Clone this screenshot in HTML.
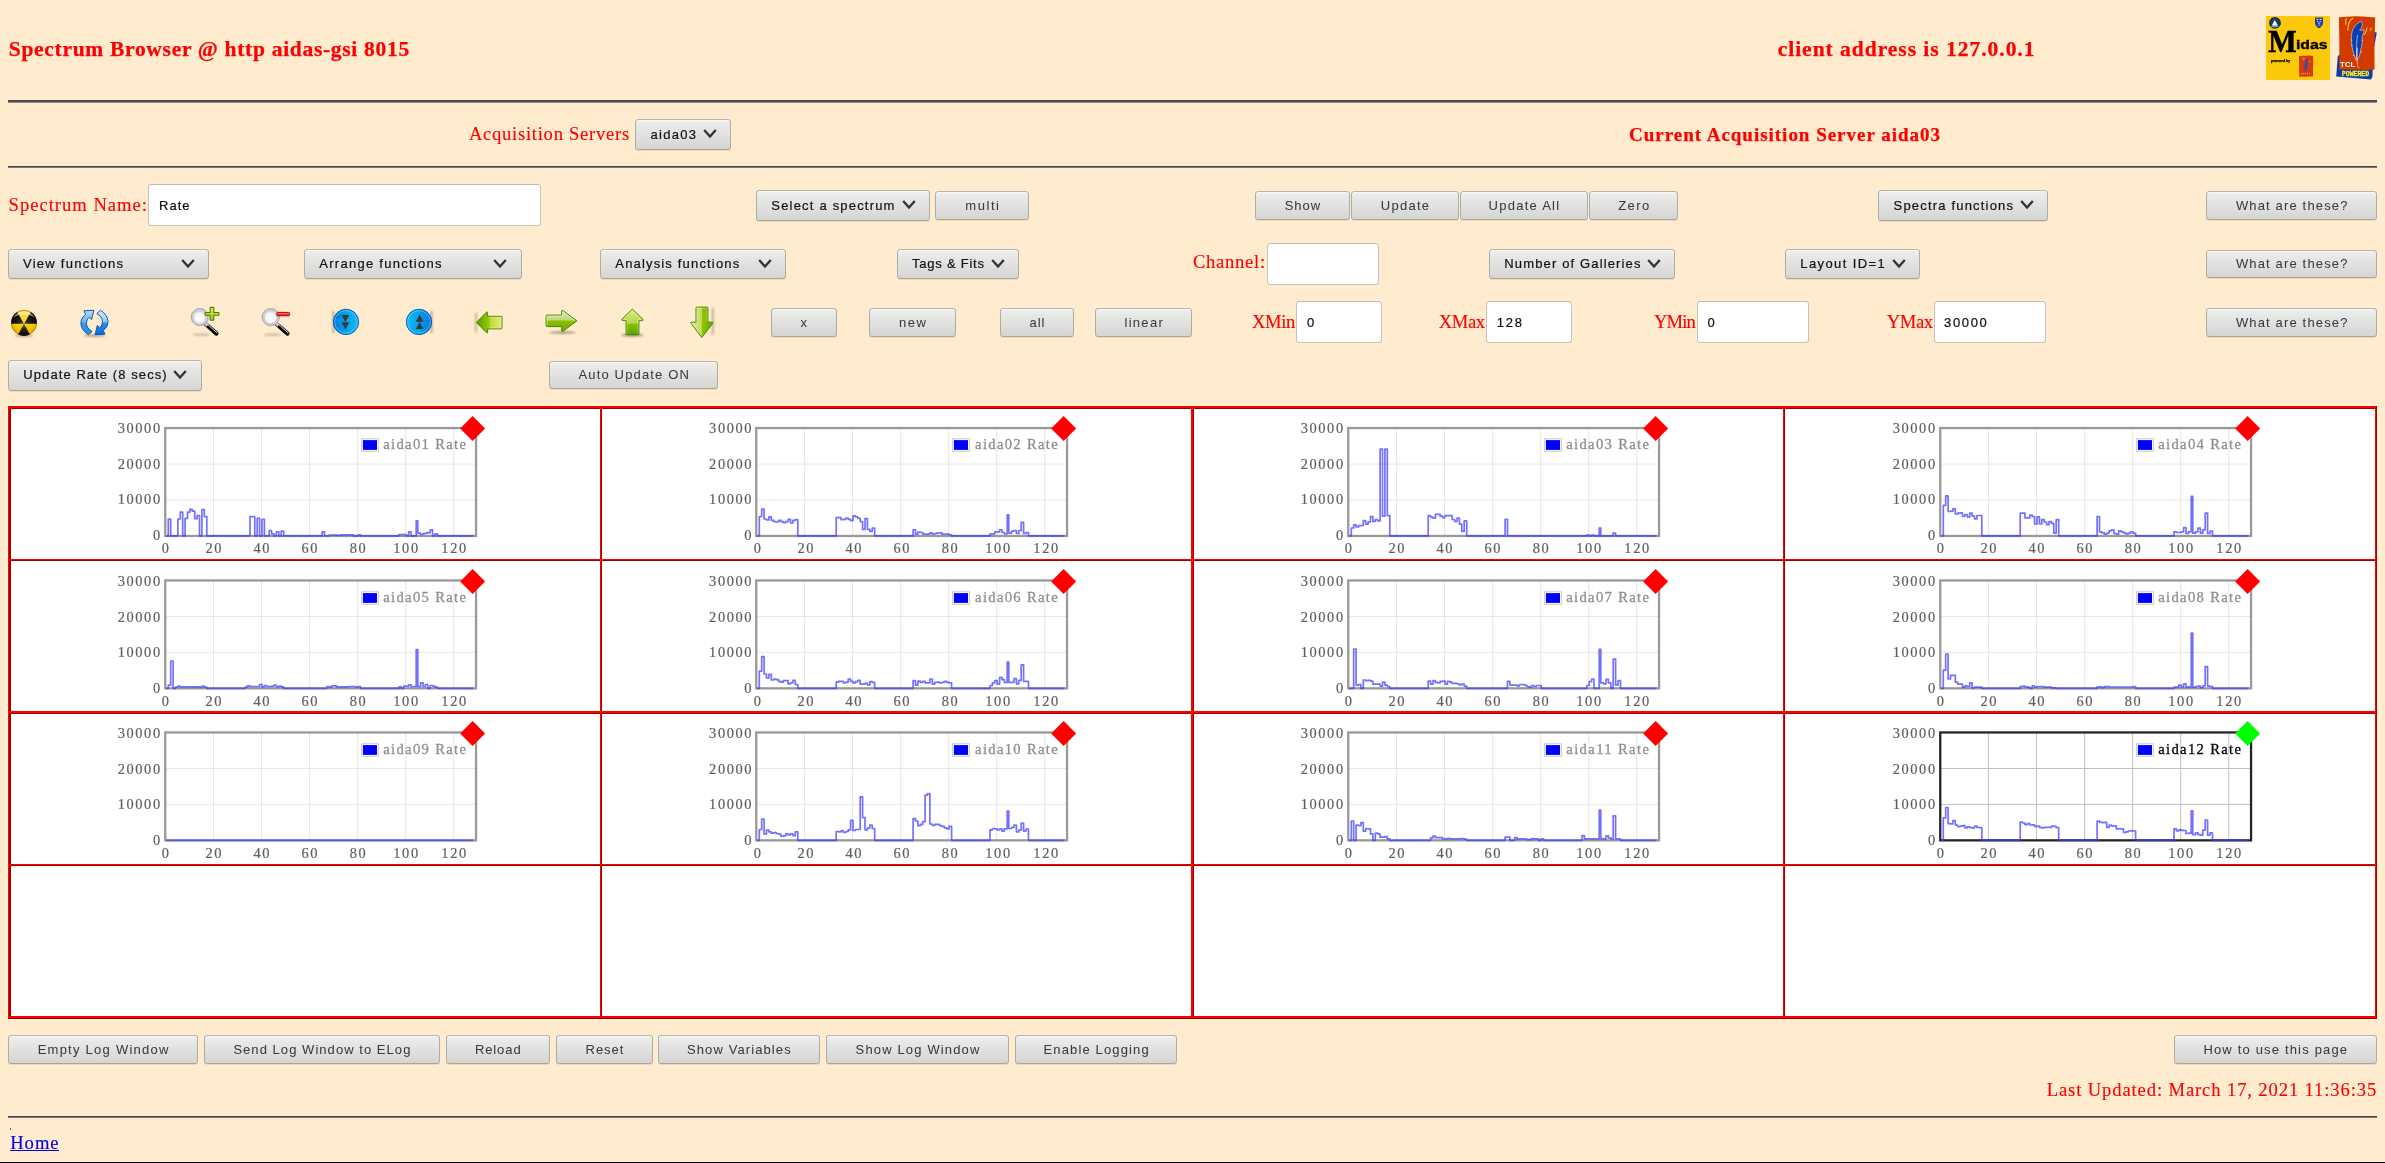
<!DOCTYPE html>
<html lang="en"><head><meta charset="utf-8"><title>Spectrum Browser</title>
<style>
html,body{margin:0;padding:0}
body{width:2385px;height:1163px;position:relative;overflow:hidden;background:#ffebcd;font:18px "Liberation Serif",serif}
.t{position:absolute;white-space:nowrap;line-height:1;margin:0;padding:0;display:block}
h2.t,h3.t{font-weight:bold}
.hr{position:absolute;left:8px;width:2369px;height:2px;background:linear-gradient(#46484c 0 50%,#76787c 50% 100%);border:0}
.btn,.sel{position:absolute;box-sizing:border-box;border:1px solid #b1b1ae;border-color:#b4b4b1 #acaca9 #aca598;border-radius:3.5px;
 background:linear-gradient(#efefee 0,#e6e6e5 30%,#d5d5d4 100%);box-shadow:inset 0 1px 0 #f7f7f6,0 1px 0 rgba(170,150,120,.22);margin:0;padding:0}
.btn{display:flex;align-items:center;justify-content:center;font:13px "Liberation Sans",sans-serif;color:#373c3f;cursor:default}
.btn span{display:block;position:relative;white-space:nowrap}
.sel{font:13px "Liberation Sans",sans-serif;color:#141414}
.sel span{position:absolute;line-height:1;white-space:nowrap}
.sel i{position:absolute;display:block;width:14px;height:10px}
.chev{display:block}
.inp{position:absolute;box-sizing:border-box;border:1px solid #c3c3c1;border-top-color:#bbbbb9;border-radius:3.5px;background:#fff;font:13px "Liberation Sans",sans-serif;color:#111;margin:0;padding:0 0 0 0;outline:0;padding-top:1px}
svg.ic{position:absolute;overflow:visible}
#page{position:absolute;left:0;top:0;width:2385px;height:1163px;will-change:transform}
.t{-webkit-text-stroke:.14px currentColor}
h2.t,h3.t{-webkit-text-stroke:.25px currentColor}
.btn span{-webkit-text-stroke:.04px currentColor}
.sel span,.inp{-webkit-text-stroke:.22px currentColor}
</style></head>
<body>
<div id="page">
<h2 class="t" style="left:8.80px;top:37.29px;font:bold 21.5px 'Liberation Serif', serif;letter-spacing:0.698px;color:#ff0000;">Spectrum Browser @ http aidas-gsi 8015</h2>
<h2 class="t" style="left:1777.70px;top:37.29px;font:bold 21.5px 'Liberation Serif', serif;letter-spacing:0.979px;color:#ff0000;">client address is 127.0.0.1</h2>
<div class="hr" style="top:100px;height:3px;background:linear-gradient(#44464a 0 33.3%,#4f5155 33.3% 66.6%,#8c8e90 66.6% 100%)"></div>
<span class="t" style="left:468.90px;top:123.42px;font:18.6px 'Liberation Serif', serif;letter-spacing:0.728px;color:#ff0000;">Acquisition Servers</span>
<div class="sel" style="left:635.3px;top:119.2px;width:95.90px;height:30.60px"><span style="left:14.10px;top:7.55px;letter-spacing:1.331px">aida03</span><i style="left:66.70px;top:8.90px"><svg class="chev" width="14" height="10" viewBox="0 0 14 10"><path d="M1.2 1.0 L7 7.6 L12.8 1.0" fill="none" stroke="#2e3436" stroke-width="2.3" stroke-linecap="butt" stroke-linejoin="miter"/></svg></i></div>
<h3 class="t" style="left:1629.00px;top:123.59px;font:bold 19px 'Liberation Serif', serif;letter-spacing:0.982px;color:#ff0000;">Current Acquisition Server aida03</h3>
<div class="hr" style="top:166px"></div>
<span class="t" style="left:8.60px;top:194.02px;font:18.6px 'Liberation Serif', serif;letter-spacing:0.994px;color:#ff0000;">Spectrum Name:</span>
<input class="inp" type="text" value="Rate" style="left:148.25px;top:184.2px;width:392.25px;height:42.00px;padding-left:9.85px;letter-spacing:0.977px;">
<div class="sel" style="left:756.25px;top:190.2px;width:173.50px;height:30.50px"><span style="left:14.05px;top:7.60px;letter-spacing:1.194px">Select a spectrum</span><i style="left:144.25px;top:8.85px"><svg class="chev" width="14" height="10" viewBox="0 0 14 10"><path d="M1.2 1.0 L7 7.6 L12.8 1.0" fill="none" stroke="#2e3436" stroke-width="2.3" stroke-linecap="butt" stroke-linejoin="miter"/></svg></i></div>
<button type="button" class="btn" style="left:935.25px;top:191.2px;width:93.75px;height:28.40px"><span style="letter-spacing:1.574px;margin-right:-1.574px;top:0.20px">multi</span></button>
<button type="button" class="btn" style="left:1255.25px;top:191.2px;width:94.25px;height:28.40px"><span style="letter-spacing:0.99px;margin-right:-0.99px;top:0.20px">Show</span></button>
<button type="button" class="btn" style="left:1351.25px;top:191.2px;width:107.25px;height:28.40px"><span style="letter-spacing:1.266px;margin-right:-1.266px;top:0.20px">Update</span></button>
<button type="button" class="btn" style="left:1459.5px;top:191.2px;width:128.75px;height:28.40px"><span style="letter-spacing:1.248px;margin-right:-1.248px;top:0.20px">Update All</span></button>
<button type="button" class="btn" style="left:1589.25px;top:191.2px;width:89.00px;height:28.40px"><span style="letter-spacing:1.422px;margin-right:-1.422px;top:0.20px">Zero</span></button>
<div class="sel" style="left:1878.4px;top:190.2px;width:169.50px;height:30.50px"><span style="left:14.20px;top:7.60px;letter-spacing:1.184px">Spectra functions</span><i style="left:140.80px;top:8.85px"><svg class="chev" width="14" height="10" viewBox="0 0 14 10"><path d="M1.2 1.0 L7 7.6 L12.8 1.0" fill="none" stroke="#2e3436" stroke-width="2.3" stroke-linecap="butt" stroke-linejoin="miter"/></svg></i></div>
<button type="button" class="btn" style="left:2206.1px;top:191.2px;width:171.15px;height:28.40px"><span style="letter-spacing:1.151px;margin-right:-1.151px;top:0.20px">What are these?</span></button>
<div class="sel" style="left:8.25px;top:248.8px;width:200.75px;height:30.50px"><span style="left:13.75px;top:7.00px;letter-spacing:1.258px">View functions</span><i style="left:171.85px;top:8.85px"><svg class="chev" width="14" height="10" viewBox="0 0 14 10"><path d="M1.2 1.0 L7 7.6 L12.8 1.0" fill="none" stroke="#2e3436" stroke-width="2.3" stroke-linecap="butt" stroke-linejoin="miter"/></svg></i></div>
<div class="sel" style="left:304.25px;top:248.8px;width:217.50px;height:30.50px"><span style="left:14.05px;top:7.00px;letter-spacing:1.265px">Arrange functions</span><i style="left:187.75px;top:8.85px"><svg class="chev" width="14" height="10" viewBox="0 0 14 10"><path d="M1.2 1.0 L7 7.6 L12.8 1.0" fill="none" stroke="#2e3436" stroke-width="2.3" stroke-linecap="butt" stroke-linejoin="miter"/></svg></i></div>
<div class="sel" style="left:600.25px;top:248.8px;width:186.00px;height:30.50px"><span style="left:14.05px;top:7.00px;letter-spacing:1.167px">Analysis functions</span><i style="left:156.45px;top:8.85px"><svg class="chev" width="14" height="10" viewBox="0 0 14 10"><path d="M1.2 1.0 L7 7.6 L12.8 1.0" fill="none" stroke="#2e3436" stroke-width="2.3" stroke-linecap="butt" stroke-linejoin="miter"/></svg></i></div>
<div class="sel" style="left:896.5px;top:248.8px;width:122.50px;height:30.50px"><span style="left:14.50px;top:7.00px;letter-spacing:0.765px">Tags &amp; Fits</span><i style="left:93.20px;top:8.85px"><svg class="chev" width="14" height="10" viewBox="0 0 14 10"><path d="M1.2 1.0 L7 7.6 L12.8 1.0" fill="none" stroke="#2e3436" stroke-width="2.3" stroke-linecap="butt" stroke-linejoin="miter"/></svg></i></div>
<span class="t" style="left:1192.90px;top:251.42px;font:18.6px 'Liberation Serif', serif;letter-spacing:0.737px;color:#ff0000;">Channel:</span>
<input class="inp" type="text" value="" style="left:1266.5px;top:243px;width:112.25px;height:42.00px;padding-left:9.00px;letter-spacing:0px;">
<div class="sel" style="left:1489px;top:248.8px;width:185.75px;height:30.50px"><span style="left:14.30px;top:7.00px;letter-spacing:1.141px">Number of Galleries</span><i style="left:156.70px;top:8.85px"><svg class="chev" width="14" height="10" viewBox="0 0 14 10"><path d="M1.2 1.0 L7 7.6 L12.8 1.0" fill="none" stroke="#2e3436" stroke-width="2.3" stroke-linecap="butt" stroke-linejoin="miter"/></svg></i></div>
<div class="sel" style="left:1785.25px;top:248.8px;width:134.50px;height:30.50px"><span style="left:14.05px;top:7.00px;letter-spacing:1.393px">Layout ID=1</span><i style="left:105.45px;top:8.85px"><svg class="chev" width="14" height="10" viewBox="0 0 14 10"><path d="M1.2 1.0 L7 7.6 L12.8 1.0" fill="none" stroke="#2e3436" stroke-width="2.3" stroke-linecap="butt" stroke-linejoin="miter"/></svg></i></div>
<button type="button" class="btn" style="left:2206.1px;top:249.5px;width:171.15px;height:28.20px"><span style="letter-spacing:1.151px;margin-right:-1.151px;top:-0.30px">What are these?</span></button>
<button type="button" class="btn" style="left:770.75px;top:308.1px;width:66.00px;height:28.50px"><span style="letter-spacing:0.0px;margin-right:-0.0px;top:-0.25px">x</span></button>
<button type="button" class="btn" style="left:869px;top:308.1px;width:87.00px;height:28.50px"><span style="letter-spacing:1.57px;margin-right:-1.57px;top:-0.25px">new</span></button>
<button type="button" class="btn" style="left:999.75px;top:308.1px;width:74.50px;height:28.50px"><span style="letter-spacing:0.992px;margin-right:-0.992px;top:-0.25px">all</span></button>
<button type="button" class="btn" style="left:1095.25px;top:308.1px;width:96.75px;height:28.50px"><span style="letter-spacing:1.291px;margin-right:-1.291px;top:-0.25px">linear</span></button>
<span class="t" style="left:1252.00px;top:311.02px;font:18.6px 'Liberation Serif', serif;letter-spacing:-0.379px;color:#ff0000;">XMin</span>
<input class="inp" type="text" value="0" style="left:1296.4px;top:301.3px;width:85.80px;height:42.10px;padding-left:9.70px;letter-spacing:0.0px;">
<span class="t" style="left:1438.80px;top:311.02px;font:18.6px 'Liberation Serif', serif;letter-spacing:-0.439px;color:#ff0000;">XMax</span>
<input class="inp" type="text" value="128" style="left:1486.25px;top:301.3px;width:85.75px;height:42.10px;padding-left:9.55px;letter-spacing:1.748px;">
<span class="t" style="left:1654.00px;top:311.02px;font:18.6px 'Liberation Serif', serif;letter-spacing:-0.879px;color:#ff0000;">YMin</span>
<input class="inp" type="text" value="0" style="left:1697px;top:301.3px;width:111.50px;height:42.10px;padding-left:9.50px;letter-spacing:0.0px;">
<span class="t" style="left:1886.80px;top:311.02px;font:18.6px 'Liberation Serif', serif;letter-spacing:-0.439px;color:#ff0000;">YMax</span>
<input class="inp" type="text" value="30000" style="left:1933.75px;top:301.3px;width:112.00px;height:42.10px;padding-left:9.25px;letter-spacing:1.648px;">
<button type="button" class="btn" style="left:2206.1px;top:308.1px;width:171.15px;height:28.50px"><span style="letter-spacing:1.151px;margin-right:-1.151px;top:-0.25px">What are these?</span></button>
<div class="sel" style="left:8.2px;top:360.0px;width:193.55px;height:30.80px"><span style="left:14.10px;top:6.80px;letter-spacing:1.082px">Update Rate (8 secs)</span><i style="left:164.10px;top:9.00px"><svg class="chev" width="14" height="10" viewBox="0 0 14 10"><path d="M1.2 1.0 L7 7.6 L12.8 1.0" fill="none" stroke="#2e3436" stroke-width="2.3" stroke-linecap="butt" stroke-linejoin="miter"/></svg></i></div>
<button type="button" class="btn" style="left:548.9px;top:361.0px;width:169.60px;height:27.90px"><span style="letter-spacing:1.155px;margin-right:-1.155px;top:-0.65px">Auto Update ON</span></button>
<button type="button" class="btn" style="left:8.25px;top:1035.1px;width:189.50px;height:28.50px"><span style="letter-spacing:1.25px;margin-right:-1.25px;top:0.15px">Empty Log Window</span></button>
<button type="button" class="btn" style="left:204px;top:1035.1px;width:235.75px;height:28.50px"><span style="letter-spacing:1.048px;margin-right:-1.048px;top:0.15px">Send Log Window to ELog</span></button>
<button type="button" class="btn" style="left:445.5px;top:1035.1px;width:104.50px;height:28.50px"><span style="letter-spacing:0.909px;margin-right:-0.909px;top:0.15px">Reload</span></button>
<button type="button" class="btn" style="left:556.25px;top:1035.1px;width:96.35px;height:28.50px"><span style="letter-spacing:0.933px;margin-right:-0.933px;top:0.15px">Reset</span></button>
<button type="button" class="btn" style="left:658.1px;top:1035.1px;width:161.50px;height:28.50px"><span style="letter-spacing:1.102px;margin-right:-1.102px;top:0.15px">Show Variables</span></button>
<button type="button" class="btn" style="left:826.2px;top:1035.1px;width:182.60px;height:28.50px"><span style="letter-spacing:1.152px;margin-right:-1.152px;top:0.15px">Show Log Window</span></button>
<button type="button" class="btn" style="left:1014.8px;top:1035.1px;width:162.60px;height:28.50px"><span style="letter-spacing:1.142px;margin-right:-1.142px;top:0.15px">Enable Logging</span></button>
<button type="button" class="btn" style="left:2173.7px;top:1035.1px;width:203.10px;height:28.50px"><span style="letter-spacing:1.173px;margin-right:-1.173px;top:0.15px">How to use this page</span></button>
<span class="t" style="left:2046.70px;top:1079.02px;font:18.6px 'Liberation Serif', serif;letter-spacing:0.881px;color:#ff0000;">Last Updated: March 17, 2021 11:36:35</span>
<div class="hr" style="top:1116px"></div>
<div style="position:absolute;left:10.1px;top:1128.1px;width:1.4px;height:1.5px;background:#333;border-radius:.4px"></div>
<a class="t" style="left:10.20px;top:1131.67px;font:18.6px 'Liberation Serif', serif;letter-spacing:0.982px;color:#0000ee;text-decoration:underline;text-decoration-thickness:1px;text-underline-offset:1.2px;width:48.7px;height:22px;overflow:hidden">Home</a>
<div style="position:absolute;left:0;top:1162px;width:2385px;height:1px;background:#000"></div>
<svg width="0" height="0" style="position:absolute"><defs>
<filter id="blur1" x="-50%" y="-200%" width="200%" height="500%"><feGaussianBlur stdDeviation="1.1"/></filter>
<filter id="blur2" x="-300%" y="-50%" width="700%" height="200%"><feGaussianBlur stdDeviation="0.9"/></filter>
<radialGradient id="nkY" cx=".5" cy=".3" r=".75"><stop offset="0" stop-color="#ffe23c"/><stop offset=".6" stop-color="#f8c400"/><stop offset="1" stop-color="#e0a000"/></radialGradient>
<radialGradient id="nkK" cx=".5" cy=".52" r=".5"><stop offset="0" stop-color="#6a6a6a"/><stop offset=".35" stop-color="#2a2a2a"/><stop offset="1" stop-color="#000"/></radialGradient>
<linearGradient id="nkG" x1="0" y1="0" x2="0" y2="1"><stop offset="0" stop-color="#fff" stop-opacity=".85"/><stop offset="1" stop-color="#fff" stop-opacity="0"/></linearGradient>
<linearGradient id="rfA" x1="0" y1="0" x2="0" y2="1"><stop offset="0" stop-color="#b4dcf8"/><stop offset=".48" stop-color="#6db7ee"/><stop offset=".52" stop-color="#3a9be6"/><stop offset="1" stop-color="#2a8be0"/></linearGradient>
<linearGradient id="rfB" x1="0" y1="1" x2="0" y2="0"><stop offset="0" stop-color="#d6ebfb"/><stop offset=".48" stop-color="#8ec8f2"/><stop offset=".52" stop-color="#2d8fe2"/><stop offset="1" stop-color="#0a6cd6"/></linearGradient>
<radialGradient id="lens" cx=".45" cy=".6" r=".6"><stop offset="0" stop-color="#ffffff"/><stop offset=".7" stop-color="#f2f2f2"/><stop offset="1" stop-color="#d4d4d4"/></radialGradient>
<linearGradient id="grP" x1="0" y1="0" x2="0" y2="1"><stop offset="0" stop-color="#e2ee5a"/><stop offset=".5" stop-color="#c0d838"/><stop offset="1" stop-color="#9cc220"/></linearGradient>
<linearGradient id="rdM" x1="0" y1="0" x2="0" y2="1"><stop offset="0" stop-color="#f68a8a"/><stop offset=".5" stop-color="#e84a4a"/><stop offset="1" stop-color="#d41c1c"/></linearGradient>
<linearGradient id="blD" x1="0" y1="0" x2="1" y2="0"><stop offset="0" stop-color="#0072d6"/><stop offset=".55" stop-color="#00a8f0"/><stop offset="1" stop-color="#1cb4f4"/></linearGradient>
<linearGradient id="blU" x1="0" y1="0" x2="1" y2="0"><stop offset="0" stop-color="#1cb4f4"/><stop offset=".45" stop-color="#00a8f0"/><stop offset="1" stop-color="#0072d6"/></linearGradient>
<linearGradient id="gL" x1="0" y1="0" x2="1" y2="0"><stop offset="0" stop-color="#4fa000"/><stop offset=".5" stop-color="#9cc800"/><stop offset=".55" stop-color="#c2d83c"/><stop offset="1" stop-color="#e2ec78"/></linearGradient>
<linearGradient id="gR" x1="0" y1="0" x2="0" y2="1"><stop offset="0" stop-color="#e0eeb0"/><stop offset=".46" stop-color="#bcd878"/><stop offset=".5" stop-color="#8cc000"/><stop offset="1" stop-color="#66a800"/></linearGradient>
<linearGradient id="gU" x1="0" y1="0" x2="0" y2="1"><stop offset="0" stop-color="#dcea80"/><stop offset=".55" stop-color="#b8d44c"/><stop offset=".58" stop-color="#8cc000"/><stop offset="1" stop-color="#58a400"/></linearGradient>
<linearGradient id="gD" x1="0" y1="0" x2="1" y2="0"><stop offset="0" stop-color="#e6f0a0"/><stop offset=".48" stop-color="#c0d860"/><stop offset=".52" stop-color="#90c400"/><stop offset="1" stop-color="#68a800"/></linearGradient>
</defs></svg><svg class="ic" style="left:10px;top:309px" width="28" height="30" viewBox="0 0 28 30"><ellipse cx="14" cy="26.6" rx="9.5" ry="1.3" fill="#000" opacity=".3" filter="url(#blur1)"/><circle cx="14" cy="13.9" r="12.9" fill="url(#nkY)"/><path d="M14,14.700000000000001 L26.88,14.69 A12.9,12.9 0 0 0 20.84,2.96 Z M14,14.700000000000001 L7.16,2.96 A12.9,12.9 0 0 0 1.12,14.69 Z M14,14.700000000000001 L8.14,25.39 A12.9,12.9 0 0 0 19.86,25.39 Z" fill="url(#nkK)"/><circle cx="14" cy="13.9" r="12.6" fill="none" stroke="#3a2a00" stroke-opacity=".55" stroke-width=".7"/><path d="M3.01,17.90 A11.700000000000001,11.700000000000001 0 0 1 24.99,17.90 A15,9 0 0 0 3.01,17.90Z" fill="url(#nkG)" opacity=".0"/><path d="M3.6,8.4 A11.8,11.8 0 0 1 24.4,8.4 A13,7.5 0 0 0 3.6,8.4Z" fill="#fff" opacity=".55"/></svg><svg class="ic" style="left:80px;top:309px" width="29" height="28" viewBox="0 0 29 28"><ellipse cx="14.5" cy="26.6" rx="11" ry="1.4" fill="#000" opacity=".3" filter="url(#blur1)"/><path d="M8.5,25.7 C3.6,22.6 0.6,18.4 1.0,13.2 C1.3,10.2 2.9,7.6 5.6,5.6 L4,1.8 L13.8,1.3 L11.6,10.6 L9.3,8.2 C7.4,9.8 6.5,11.8 6.5,14.4 C6.5,17.8 8.6,20.5 12.1,22.4 Z" fill="url(#rfA)" stroke="#0a55b8" stroke-width="1" stroke-linejoin="round"/><path d="M8.5,25.7 C3.6,22.6 0.6,18.4 1.0,13.2 C1.3,10.2 2.9,7.6 5.6,5.6 L4,1.8 L13.8,1.3 L11.6,10.6 L9.3,8.2 C7.4,9.8 6.5,11.8 6.5,14.4 C6.5,17.8 8.6,20.5 12.1,22.4 Z" transform="rotate(180 14.45 13.5)" fill="url(#rfB)" stroke="#0a55b8" stroke-width="1" stroke-linejoin="round"/></svg><svg class="ic" style="left:188px;top:305px" width="34" height="33" viewBox="0 0 34 33"><ellipse cx="13.5" cy="29.6" rx="9" ry="1.1" fill="#000" opacity=".22" filter="url(#blur1)"/><path d="M17.6,19.0 L28.5,28.65" stroke="#000" stroke-width="4.1" stroke-linecap="round"/><path d="M18.2,18.2 L29.1,27.85" stroke="#fff" stroke-width="1.0" stroke-linecap="round" opacity=".9"/><path d="M16.2,17.2 L19.6,20.4" stroke="#c8c8c8" stroke-width="3.4"/><circle cx="11.75" cy="12.1" r="8.6" fill="#c4c4c4" stroke="#a0a0a0" stroke-width=".8"/><circle cx="11.75" cy="12.1" r="7.4" fill="#e4e4e4"/><circle cx="11.75" cy="12.1" r="6.5" fill="url(#lens)" stroke="#b4b4b4" stroke-width=".6"/><path d="M22.65,2.3500000000000005 h2.7 a.5,.5 0 0 1 .5,.5 v4.60 h4.60 a.5,.5 0 0 1 .5,.5 v1.70 a.5,.5 0 0 1 -.5,.5 h-4.60 v4.60 a.5,.5 0 0 1 -.5,.5 h-2.7 a.5,.5 0 0 1 -.5,-.5 v-4.60 h-4.60 a.5,.5 0 0 1 -.5,-.5 v-1.70 a.5,.5 0 0 1 .5,-.5 h4.60 v-4.60 a.5,.5 0 0 1 .5,-.5Z" fill="url(#grP)" stroke="#418200" stroke-width="1.05" stroke-linejoin="round"/></svg><svg class="ic" style="left:258.95px;top:305px" width="34" height="33" viewBox="0 0 34 33"><ellipse cx="13.5" cy="29.6" rx="9" ry="1.1" fill="#000" opacity=".22" filter="url(#blur1)"/><path d="M17.6,19.0 L28.5,28.65" stroke="#000" stroke-width="4.1" stroke-linecap="round"/><path d="M18.2,18.2 L29.1,27.85" stroke="#fff" stroke-width="1.0" stroke-linecap="round" opacity=".9"/><path d="M16.2,17.2 L19.6,20.4" stroke="#c8c8c8" stroke-width="3.4"/><circle cx="11.75" cy="12.1" r="8.6" fill="#c4c4c4" stroke="#a0a0a0" stroke-width=".8"/><circle cx="11.75" cy="12.1" r="7.4" fill="#e4e4e4"/><circle cx="11.75" cy="12.1" r="6.5" fill="url(#lens)" stroke="#b4b4b4" stroke-width=".6"/><rect x="17.7" y="7.4" width="13" height="3.3" rx="1.1" fill="url(#rdM)" stroke="#c00000" stroke-width="1"/><rect x="17.9" y="11.3" width="13" height="1.1" rx=".55" fill="#3a6a6a" opacity=".18"/></svg><svg class="ic" style="left:331px;top:307px" width="30" height="30" viewBox="0 0 30 30"><rect x="1.7" y="4" width="1.6" height="22" fill="#000" opacity=".38" filter="url(#blur2)"/><circle cx="15" cy="14.9" r="12.7" fill="url(#blD)" stroke="#0058b8" stroke-width=".9"/><circle cx="15" cy="14.9" r="11.3" fill="none" stroke="#8ad4fa" stroke-width=".8" opacity=".75"/><path d="M10.6,8 L18.2,8 L14.4,15.2 Z M10.6,15.2 L18.2,15.2 L14.4,22.8 Z" fill="#3a3836"/></svg><svg class="ic" style="left:404px;top:307px" width="30" height="30" viewBox="0 0 30 30"><rect x="26.7" y="4" width="1.6" height="22" fill="#000" opacity=".38" filter="url(#blur2)"/><circle cx="15" cy="14.9" r="12.7" fill="url(#blU)" stroke="#0058b8" stroke-width=".9"/><circle cx="15" cy="14.9" r="11.3" fill="none" stroke="#8ad4fa" stroke-width=".8" opacity=".75"/><path d="M15.6,7.4 L19.4,14.7 L11.8,14.7 Z M15.6,14.7 L19.4,22 L11.8,22 Z" fill="#3a3836"/></svg><svg class="ic" style="left:472px;top:308px" width="32" height="28" viewBox="0 0 32 28"><rect x="3.2" y="4.5" width="1.5" height="20" fill="#000" opacity=".32" filter="url(#blur2)"/><path d="M4.4,14.4 L14.6,4.1 Q15.5,3.4 15.6,4.6 L15.6,8.3 L29.2,8.3 Q30,8.3 30,9.1 L30,20.1 Q30,20.9 29.2,20.9 L15.6,20.9 L15.6,24.4 Q15.5,25.6 14.6,24.8 Z" fill="url(#gL)" stroke="#3f8a00" stroke-width="1" stroke-linejoin="round"/><path d="M16.3,9.3 L29,9.3 L29,19.9 L16.3,19.9" fill="none" stroke="#f4f8c0" stroke-width=".7" opacity=".6"/></svg><svg class="ic" style="left:544px;top:308px" width="35" height="27" viewBox="0 0 35 27"><ellipse cx="18.5" cy="24.5" rx="13.5" ry="1.2" fill="#000" opacity=".4" filter="url(#blur1)"/><path d="M32.8,12.9 L18.8,2.4 Q17.8,1.8 17.7,3 L17.7,7.1 L2.9,7.1 Q2.1,7.1 2.1,7.9 L2.1,17.8 Q2.1,18.6 2.9,18.6 L17.7,18.6 L17.7,22.9 Q17.8,24 18.8,23.4 Z" fill="url(#gR)" stroke="#3f8a00" stroke-width="1" stroke-linejoin="round"/><path d="M3.1,17.6 L3.1,8.1 L18.6,8.1 L18.6,3.8 L31,12.9" fill="none" stroke="#f6fad8" stroke-width=".7" opacity=".7"/></svg><svg class="ic" style="left:618px;top:306px" width="30" height="31" viewBox="0 0 30 31"><ellipse cx="14.4" cy="29.1" rx="11.5" ry="1.3" fill="#000" opacity=".45" filter="url(#blur1)"/><path d="M14.4,3.1 L24.9,13.3 Q25.6,14.4 24.4,14.6 L20.9,14.6 L20.9,27.9 Q20.9,28.7 20.1,28.7 L8.9,28.7 Q8.1,28.7 8.1,27.9 L8.1,14.6 L4.4,14.6 Q3.2,14.4 4,13.3 Z" fill="url(#gU)" stroke="#3f8a00" stroke-width="1" stroke-linejoin="round"/><path d="M9.1,27.7 L9.1,13.6 L5.6,13.6 L14.4,4.6 L23.3,13.6 L19.9,13.6 L19.9,27.7" fill="none" stroke="#f2f8c0" stroke-width=".7" opacity=".55"/></svg><svg class="ic" style="left:688px;top:304px" width="28" height="36" viewBox="0 0 28 36"><rect x="24.0" y="4" width="1.5" height="27" fill="#000" opacity=".34" filter="url(#blur2)"/><path d="M13.8,33.6 L3,19.4 Q2.4,18.3 3.6,18.2 L8,18.2 L8,3.9 Q8,3.1 8.8,3.1 L19.1,3.1 Q19.9,3.1 19.9,3.9 L19.9,18.2 L24.2,18.2 Q25.4,18.3 24.7,19.4 Z" fill="url(#gD)" stroke="#3f8a00" stroke-width="1" stroke-linejoin="round"/><path d="M9,17.2 L9,4.1 L18.9,4.1 L18.9,17.2" fill="none" stroke="#f6fad0" stroke-width=".7" opacity=".6"/></svg>
<svg class="ic" style="left:2266px;top:16px" width="64" height="64" viewBox="0 0 64 64"><rect width="64" height="64" fill="#fcc80a"/><circle cx="9" cy="6.9" r="5.9" fill="#0c2c5c"/><circle cx="9" cy="6.9" r="4.6" fill="#1d4a78" opacity=".6"/><path d="M8.8,4 L5.9,9.2 Q9,10.4 11.8,9.2 Z" fill="#eef4fa"/><path d="M5.4,10.2 Q9,12 12.4,10.2" stroke="#dfe8f2" stroke-width=".7" fill="none"/><path d="M49,1.4 L57,1.4 L57,7 Q56.6,10.6 53,12.2 Q49.4,10.6 49,7 Z" fill="#1a3ca8"/><path d="M50.4,3.4 h2 M53.6,3.4 h2.2 M51,5.6 h1.4 M53.8,5.6 h1.4 M52.2,7.6 l1,-.8 l1,.8 M52.4,9.6 l.8,-.9 l.8,.9" stroke="#f0f0ff" stroke-width=".9" fill="none"/><text x="2.2" y="35.6" font-family="Liberation Serif, serif" font-weight="bold" font-size="31.4" textLength="28.4" lengthAdjust="spacingAndGlyphs" fill="#000" stroke="#000" stroke-width=".55">M</text><text x="29.9" y="32.6" font-family="Liberation Sans, sans-serif" font-weight="bold" font-size="13.2" textLength="31.6" lengthAdjust="spacingAndGlyphs" fill="#000" stroke="#000" stroke-width=".35">idas</text><text x="5" y="46.4" font-family="Liberation Serif, serif" font-weight="bold" font-size="4.4" textLength="19.2" lengthAdjust="spacingAndGlyphs" fill="#000" stroke="#000" stroke-width=".25">powered by</text><g><path d="M33,40 L43.4,39.6 L47.2,40.3 L47,60.6 L33.2,60.8 Z" fill="#d63a0c"/><path d="M41.2,42.8 C39.2,44.6 38.4,49 38.6,52 C38.8,54.4 39.2,55.6 39.6,55.9 C40.8,53.6 41.6,50 41.4,47.4 C42.4,46.8 42.4,44 41.2,42.8Z" fill="#1c4fc0"/><path d="M36.4,42.2 q.9,1 1,2.6 M37.6,41.6 q.8,.9 .9,2 M43.6,44.6 q-.5,.9 -1.2,1.4 M44.6,44.9 q-.4,.7 -.9,1" stroke="#ffcc33" stroke-width=".6" fill="none"/><path d="M34.6,57.6 h1 M36.6,57.6 h1.2 M38.8,57.6 h1 M40.8,57.6 h1.2 M43,57.6 h1" stroke="#ffb070" stroke-width=".9"/></g></svg><svg class="ic" style="left:2335px;top:14px" width="44" height="68" viewBox="0 0 44 68"><path d="M2.8,42 L4.2,41 L39.2,18 L41.8,18.4 L38.6,36 L37.4,63 L35.8,65.6 L1.2,62.4 Z" fill="#0c3cae"/><path d="M3.9,3.2 L20,2.2 L28,2.6 L40.2,3.4 L39.4,30 L39.6,55.4 L30,55.9 L4.2,55.6 L4.4,30 Z" fill="#d23a00"/><path d="M26.6,7.4 C22.4,8.4 18.6,12.6 17.2,17.4 C15.9,22 16.2,28.4 17.2,33.2 C17.9,37.2 19.2,41.8 21.0,45.8 C21.6,42.2 22.0,38.2 22.0,33.8 C22.1,36.6 22.4,41.2 22.0,46.8 C23.8,44 25.4,39.8 25.6,36.2 C27.2,31.8 27.6,26.8 27.0,22.6 C28.4,19.6 29.2,17.0 29.0,15.4 C27.4,16.7 25.6,16.8 24.6,16.3 C27.0,13.6 28.2,10.4 26.6,7.4Z" fill="#0b3fb0" stroke="#f4e8e0" stroke-width=".55"/><path d="M22.6,21 C21.2,28 21.4,40 22.6,50.6 C22.8,52.6 23.4,54 24,54.6" fill="none" stroke="#f2e4dc" stroke-width=".6"/><path d="M17.2,26.4 l-1.6,-.8 M17.4,31 l-1.4,.2 M26.6,26.6 l1.4,-.6 M25.6,38 l1.4,-.2 M19.6,42.4 l-1.6,-1.4" stroke="#f4e8e0" stroke-width=".7"/><path d="M11.4,4.2 C10.6,6 10.4,8 10.8,10.6 M18,4 C14.6,6.2 12.6,10.6 13,16.6" fill="none" stroke="#ffc820" stroke-width="1.1"/><path d="M32.2,13.6 C31.6,16.4 30.4,19.2 29,20.8 M36.4,13.6 C36.2,15 35.6,16 35,16.6" fill="none" stroke="#ffc820" stroke-width="1.1"/><text x="5.1" y="53" font-family="Liberation Sans, sans-serif" font-weight="bold" font-size="6.9" textLength="15.2" lengthAdjust="spacingAndGlyphs" fill="#fff">TCL</text><text x="6.8" y="62.1" font-family="Liberation Mono, monospace" font-weight="bold" font-size="7" textLength="27.4" lengthAdjust="spacingAndGlyphs" fill="#ffee10" stroke="#ffee10" stroke-width=".3">POWERED</text></svg>
<div style="position:absolute;left:8px;top:406px;width:2369px;height:613px;background:#ff0000;box-shadow:0 0 0 1px #fff4d8"></div>
<div style="position:absolute;left:2376px;top:406px;width:1px;height:613px;background:#a00000"></div>
<div style="position:absolute;left:8px;top:1018px;width:2369px;height:1px;background:#a00000"></div>
<div style="position:absolute;left:9px;top:408px;width:591px;height:151px;background:#a00000"></div>
<div style="position:absolute;left:11px;top:409px;width:589px;height:150px;background:#ffffff"></div>
<div style="position:absolute;left:601px;top:408px;width:590px;height:151px;background:#a00000"></div>
<div style="position:absolute;left:602px;top:409px;width:589px;height:150px;background:#ffffff"></div>
<div style="position:absolute;left:1193px;top:408px;width:590px;height:151px;background:#a00000"></div>
<div style="position:absolute;left:1194px;top:409px;width:589px;height:150px;background:#ffffff"></div>
<div style="position:absolute;left:1784px;top:408px;width:591px;height:151px;background:#a00000"></div>
<div style="position:absolute;left:1785px;top:409px;width:590px;height:150px;background:#ffffff"></div>
<div style="position:absolute;left:9px;top:560px;width:591px;height:151px;background:#a00000"></div>
<div style="position:absolute;left:11px;top:561px;width:589px;height:150px;background:#ffffff"></div>
<div style="position:absolute;left:601px;top:560px;width:590px;height:151px;background:#a00000"></div>
<div style="position:absolute;left:602px;top:561px;width:589px;height:150px;background:#ffffff"></div>
<div style="position:absolute;left:1193px;top:560px;width:590px;height:151px;background:#a00000"></div>
<div style="position:absolute;left:1194px;top:561px;width:589px;height:150px;background:#ffffff"></div>
<div style="position:absolute;left:1784px;top:560px;width:591px;height:151px;background:#a00000"></div>
<div style="position:absolute;left:1785px;top:561px;width:590px;height:150px;background:#ffffff"></div>
<div style="position:absolute;left:9px;top:713px;width:591px;height:151px;background:#a00000"></div>
<div style="position:absolute;left:11px;top:714px;width:589px;height:150px;background:#ffffff"></div>
<div style="position:absolute;left:601px;top:713px;width:590px;height:151px;background:#a00000"></div>
<div style="position:absolute;left:602px;top:714px;width:589px;height:150px;background:#ffffff"></div>
<div style="position:absolute;left:1193px;top:713px;width:590px;height:151px;background:#a00000"></div>
<div style="position:absolute;left:1194px;top:714px;width:589px;height:150px;background:#ffffff"></div>
<div style="position:absolute;left:1784px;top:713px;width:591px;height:151px;background:#a00000"></div>
<div style="position:absolute;left:1785px;top:714px;width:590px;height:150px;background:#ffffff"></div>
<div style="position:absolute;left:9px;top:865px;width:591px;height:151px;background:#a00000"></div>
<div style="position:absolute;left:11px;top:866px;width:589px;height:150px;background:#ffffff"></div>
<div style="position:absolute;left:601px;top:865px;width:590px;height:151px;background:#a00000"></div>
<div style="position:absolute;left:602px;top:866px;width:589px;height:150px;background:#ffffff"></div>
<div style="position:absolute;left:1193px;top:865px;width:590px;height:151px;background:#a00000"></div>
<div style="position:absolute;left:1194px;top:866px;width:589px;height:150px;background:#ffffff"></div>
<div style="position:absolute;left:1784px;top:865px;width:591px;height:151px;background:#a00000"></div>
<div style="position:absolute;left:1785px;top:866px;width:590px;height:150px;background:#ffffff"></div>
<svg class="ic" style="left:100.00px;top:410.00px" width="400" height="150" viewBox="0 0 400 150"><g transform="translate(0,0)"><path d="M113.46,19 V125 M161.52,19 V125 M209.59,19 V125 M257.65,19 V125 M305.71,19 V125 M353.77,19 V125 M66,90.00 H375.5 M66,54.10 H375.5 " stroke="#e6e6e6" stroke-width="1.0" fill="none"/><rect x="65.25" y="18.05" width="310.8" height="107.9" fill="none" stroke="#999999" stroke-width="2.3"/><polyline points="65.9,125.9 68.3,125.9 68.3,109.1 70.7,109.1 70.7,125.9 77.9,125.9 77.9,109.0 80.3,109.0 80.3,102.1 82.7,102.1 82.7,125.9 85.1,125.9 85.1,108.4 87.5,108.4 87.5,102.1 89.9,102.1 89.9,99.4 92.3,99.4 92.3,101.1 94.7,101.1 94.7,108.7 97.1,108.7 97.1,105.5 99.5,105.5 99.5,125.9 101.9,125.9 101.9,99.5 104.3,99.5 104.3,106.7 106.8,106.7 106.8,125.9 150.0,125.9 150.0,106.7 154.8,106.7 154.8,125.9 157.2,125.9 157.2,108.4 159.6,108.4 159.6,125.9 162.0,125.9 162.0,109.4 164.4,109.4 164.4,125.9 169.2,125.9 169.2,120.5 171.6,120.5 171.6,123.8 174.0,123.8 174.0,125.9 176.4,125.9 176.4,121.8 178.8,121.8 178.8,125.9 181.2,125.9 181.2,121.2 183.7,121.2 183.7,125.9 222.1,125.9 222.1,121.8 224.5,121.8 224.5,125.9 229.3,125.9 229.3,125.0 236.5,125.0 236.5,125.4 241.3,125.4 241.3,124.8 253.3,124.8 253.3,125.9 258.1,125.9 258.1,124.8 260.6,124.8 260.6,125.9 299.0,125.9 299.0,124.5 306.2,124.5 306.2,125.9 308.6,125.9 308.6,121.8 311.0,121.8 311.0,125.9 316.2,125.9 316.2,110.8 317.8,110.8 317.8,123.2 320.6,123.2 320.6,124.5 323.0,124.5 323.0,123.6 325.4,123.6 325.4,123.2 327.8,123.2 327.8,122.7 330.2,122.7 330.2,119.8 332.6,119.8 332.6,125.9 335.0,125.9 335.0,123.8 337.5,123.8 337.5,125.9 373.5,125.9" fill="none" stroke="#3c3cff" stroke-opacity=".72" stroke-width="1.7" stroke-linejoin="round"/></g><g font-family="Liberation Serif, serif" font-size="14.4" letter-spacing="1.6" fill="#5e5e5e" stroke="#5e5e5e" stroke-width=".2"><text x="61.7" y="130.00" text-anchor="end">0</text><text x="61.7" y="94.37" text-anchor="end">10000</text><text x="61.7" y="58.73" text-anchor="end">20000</text><text x="61.7" y="23.10" text-anchor="end">30000</text><text x="66.20" y="142.8" text-anchor="middle">0</text><text x="114.26" y="142.8" text-anchor="middle">20</text><text x="162.32" y="142.8" text-anchor="middle">40</text><text x="210.39" y="142.8" text-anchor="middle">60</text><text x="258.45" y="142.8" text-anchor="middle">80</text><text x="306.51" y="142.8" text-anchor="middle">100</text><text x="354.57" y="142.8" text-anchor="middle">120</text></g><rect x="261.6" y="28.7" width="16.8" height="12.6" fill="#fffef4" stroke="#cccccc" stroke-width="1"/><rect x="262.9" y="30.1" width="14.1" height="9.8" fill="#0000ff"/><text x="283.3" y="39" font-family="Liberation Serif, serif" font-size="14.6" textLength="82.6" lengthAdjust="spacing" fill="#8e8e8e" stroke="#8e8e8e" stroke-width=".28">aida01 Rate</text><path d="M372.6,6.1 L385.1,18.6 L372.6,31.1 L360.1,18.6 Z" fill="#ff0000"/></svg>
<svg class="ic" style="left:690.90px;top:410.00px" width="400" height="150" viewBox="0 0 400 150"><g transform="translate(0,0)"><path d="M113.46,19 V125 M161.52,19 V125 M209.59,19 V125 M257.65,19 V125 M305.71,19 V125 M353.77,19 V125 M66,90.00 H375.5 M66,54.10 H375.5 " stroke="#e6e6e6" stroke-width="1.0" fill="none"/><rect x="65.25" y="18.05" width="310.8" height="107.9" fill="none" stroke="#999999" stroke-width="2.3"/><polyline points="65.9,125.9 68.3,125.9 68.3,106.5 70.7,106.5 70.7,99.2 73.1,99.2 73.1,109.0 75.5,109.0 75.5,109.9 77.9,109.9 77.9,106.9 80.3,106.9 80.3,110.3 82.7,110.3 82.7,111.6 85.1,111.6 85.1,112.0 87.5,112.0 87.5,110.3 89.9,110.3 89.9,111.6 92.3,111.6 92.3,112.6 94.7,112.6 94.7,111.6 97.1,111.6 97.1,109.3 99.5,109.3 99.5,113.0 101.9,113.0 101.9,110.3 104.3,110.3 104.3,109.6 106.8,109.6 106.8,125.9 145.2,125.9 145.2,107.6 150.0,107.6 150.0,109.6 152.4,109.6 152.4,109.3 154.8,109.3 154.8,108.0 157.2,108.0 157.2,109.3 159.6,109.3 159.6,110.6 162.0,110.6 162.0,105.9 164.4,105.9 164.4,106.9 166.8,106.9 166.8,108.3 169.2,108.3 169.2,111.6 171.6,111.6 171.6,119.4 174.0,119.4 174.0,108.6 176.4,108.6 176.4,119.4 178.8,119.4 178.8,121.4 181.2,121.4 181.2,118.1 183.7,118.1 183.7,125.9 222.1,125.9 222.1,119.8 224.5,119.8 224.5,124.1 226.9,124.1 226.9,122.1 229.3,122.1 229.3,122.5 231.7,122.5 231.7,124.1 238.9,124.1 238.9,122.8 241.3,122.8 241.3,124.1 243.7,124.1 243.7,123.5 246.1,123.5 246.1,122.8 250.9,122.8 250.9,124.1 258.1,124.1 258.1,124.8 260.6,124.8 260.6,125.9 299.0,125.9 299.0,123.8 303.8,123.8 303.8,121.8 308.6,121.8 308.6,119.8 311.0,119.8 311.0,122.5 313.4,122.5 313.4,123.8 316.2,123.8 316.2,104.9 317.8,104.9 317.8,123.1 320.6,123.1 320.6,121.1 323.0,121.1 323.0,120.5 325.4,120.5 325.4,123.5 327.8,123.5 327.8,120.5 330.2,120.5 330.2,112.3 332.6,112.3 332.6,123.5 335.0,123.5 335.0,122.5 337.5,122.5 337.5,125.9 373.5,125.9" fill="none" stroke="#3c3cff" stroke-opacity=".72" stroke-width="1.7" stroke-linejoin="round"/></g><g font-family="Liberation Serif, serif" font-size="14.4" letter-spacing="1.6" fill="#5e5e5e" stroke="#5e5e5e" stroke-width=".2"><text x="62.1" y="130.00" text-anchor="end">0</text><text x="62.1" y="94.37" text-anchor="end">10000</text><text x="62.1" y="58.73" text-anchor="end">20000</text><text x="62.1" y="23.10" text-anchor="end">30000</text><text x="67.20" y="142.8" text-anchor="middle">0</text><text x="115.26" y="142.8" text-anchor="middle">20</text><text x="163.32" y="142.8" text-anchor="middle">40</text><text x="211.39" y="142.8" text-anchor="middle">60</text><text x="259.45" y="142.8" text-anchor="middle">80</text><text x="307.51" y="142.8" text-anchor="middle">100</text><text x="355.57" y="142.8" text-anchor="middle">120</text></g><rect x="261.6" y="28.7" width="16.8" height="12.6" fill="#fffef4" stroke="#cccccc" stroke-width="1"/><rect x="262.9" y="30.1" width="14.1" height="9.8" fill="#0000ff"/><text x="284.1" y="39" font-family="Liberation Serif, serif" font-size="14.6" textLength="82.6" lengthAdjust="spacing" fill="#8e8e8e" stroke="#8e8e8e" stroke-width=".28">aida02 Rate</text><path d="M372.6,6.1 L385.1,18.6 L372.6,31.1 L360.1,18.6 Z" fill="#ff0000"/></svg>
<svg class="ic" style="left:1283.30px;top:410.00px" width="400" height="150" viewBox="0 0 400 150"><g transform="translate(0,0)"><path d="M113.46,19 V125 M161.52,19 V125 M209.59,19 V125 M257.65,19 V125 M305.71,19 V125 M353.77,19 V125 M66,90.00 H375.5 M66,54.10 H375.5 " stroke="#e6e6e6" stroke-width="1.0" fill="none"/><rect x="65.25" y="18.05" width="310.8" height="107.9" fill="none" stroke="#999999" stroke-width="2.3"/><polyline points="65.9,125.9 68.3,125.9 68.3,118.0 70.7,118.0 70.7,114.8 73.1,114.8 73.1,117.0 75.5,117.0 75.5,115.6 77.9,115.6 77.9,115.5 80.3,115.5 80.3,110.7 82.7,110.7 82.7,114.2 85.1,114.2 85.1,111.9 87.5,111.9 87.5,106.7 89.9,106.7 89.9,111.4 92.3,111.4 92.3,109.5 94.7,109.5 94.7,110.9 97.1,110.9 97.1,39.2 99.5,39.2 99.5,106.2 101.9,106.2 101.9,39.2 104.3,39.2 104.3,105.7 106.8,105.7 106.8,125.9 145.2,125.9 145.2,105.7 147.6,105.7 147.6,107.1 150.0,107.1 150.0,108.1 152.4,108.1 152.4,104.3 157.2,104.3 157.2,106.2 159.6,106.2 159.6,107.6 162.0,107.6 162.0,105.7 169.2,105.7 169.2,109.5 171.6,109.5 171.6,111.4 174.0,111.4 174.0,108.1 176.4,108.1 176.4,114.2 178.8,114.2 178.8,121.3 181.2,121.3 181.2,110.9 183.7,110.9 183.7,125.9 222.1,125.9 222.1,109.3 224.5,109.3 224.5,125.9 303.8,125.9 303.8,125.2 306.2,125.2 306.2,125.9 308.6,125.9 308.6,125.2 311.0,125.2 311.0,125.9 316.2,125.9 316.2,118.1 317.8,118.1 317.8,125.9 330.2,125.9 330.2,123.1 332.6,123.1 332.6,125.9 373.5,125.9" fill="none" stroke="#3c3cff" stroke-opacity=".72" stroke-width="1.7" stroke-linejoin="round"/></g><g font-family="Liberation Serif, serif" font-size="14.4" letter-spacing="1.6" fill="#5e5e5e" stroke="#5e5e5e" stroke-width=".2"><text x="61.7" y="130.00" text-anchor="end">0</text><text x="61.7" y="94.37" text-anchor="end">10000</text><text x="61.7" y="58.73" text-anchor="end">20000</text><text x="61.7" y="23.10" text-anchor="end">30000</text><text x="66.20" y="142.8" text-anchor="middle">0</text><text x="114.26" y="142.8" text-anchor="middle">20</text><text x="162.32" y="142.8" text-anchor="middle">40</text><text x="210.39" y="142.8" text-anchor="middle">60</text><text x="258.45" y="142.8" text-anchor="middle">80</text><text x="306.51" y="142.8" text-anchor="middle">100</text><text x="354.57" y="142.8" text-anchor="middle">120</text></g><rect x="261.6" y="28.7" width="16.8" height="12.6" fill="#fffef4" stroke="#cccccc" stroke-width="1"/><rect x="262.9" y="30.1" width="14.1" height="9.8" fill="#0000ff"/><text x="283.3" y="39" font-family="Liberation Serif, serif" font-size="14.6" textLength="82.6" lengthAdjust="spacing" fill="#8e8e8e" stroke="#8e8e8e" stroke-width=".28">aida03 Rate</text><path d="M372.6,6.1 L385.1,18.6 L372.6,31.1 L360.1,18.6 Z" fill="#ff0000"/></svg>
<svg class="ic" style="left:1874.65px;top:410.00px" width="400" height="150" viewBox="0 0 400 150"><g transform="translate(0,0)"><path d="M113.46,19 V125 M161.52,19 V125 M209.59,19 V125 M257.65,19 V125 M305.71,19 V125 M353.77,19 V125 M66,90.00 H375.5 M66,54.10 H375.5 " stroke="#e6e6e6" stroke-width="1.0" fill="none"/><rect x="65.25" y="18.05" width="310.8" height="107.9" fill="none" stroke="#999999" stroke-width="2.3"/><polyline points="65.9,125.9 68.3,125.9 68.3,95.4 70.7,95.4 70.7,85.9 73.1,85.9 73.1,101.5 75.5,101.5 75.5,101.2 77.9,101.2 77.9,98.8 80.3,98.8 80.3,103.9 82.7,103.9 82.7,103.2 85.1,103.2 85.1,102.9 87.5,102.9 87.5,106.2 89.9,106.2 89.9,104.5 92.3,104.5 92.3,106.9 94.7,106.9 94.7,103.2 97.1,103.2 97.1,106.2 99.5,106.2 99.5,108.9 101.9,108.9 101.9,105.5 106.8,105.5 106.8,125.9 145.2,125.9 145.2,103.2 150.0,103.2 150.0,107.9 154.8,107.9 154.8,105.2 157.2,105.2 157.2,106.5 159.6,106.5 159.6,114.0 162.0,114.0 162.0,106.9 164.4,106.9 164.4,114.0 166.8,114.0 166.8,109.6 169.2,109.6 169.2,112.0 171.6,112.0 171.6,114.7 174.0,114.7 174.0,111.6 176.4,111.6 176.4,113.3 178.8,113.3 178.8,123.1 181.2,123.1 181.2,109.6 183.7,109.6 183.7,125.9 222.1,125.9 222.1,106.5 224.5,106.5 224.5,121.8 226.9,121.8 226.9,122.8 229.3,122.8 229.3,124.1 231.7,124.1 231.7,123.1 234.1,123.1 234.1,120.8 236.5,120.8 236.5,119.8 238.9,119.8 238.9,123.5 241.3,123.5 241.3,124.1 243.7,124.1 243.7,120.8 246.1,120.8 246.1,121.8 248.5,121.8 248.5,122.8 250.9,122.8 250.9,123.8 253.3,123.8 253.3,123.1 255.7,123.1 255.7,121.8 258.1,121.8 258.1,123.1 260.6,123.1 260.6,125.9 299.0,125.9 299.0,121.8 301.4,121.8 301.4,122.5 306.2,122.5 306.2,121.8 308.6,121.8 308.6,117.7 311.0,117.7 311.0,123.5 313.4,123.5 313.4,121.8 316.2,121.8 316.2,86.3 317.8,86.3 317.8,123.1 320.6,123.1 320.6,121.8 323.0,121.8 323.0,118.1 325.4,118.1 325.4,123.1 327.8,123.1 327.8,119.8 330.2,119.8 330.2,103.2 332.6,103.2 332.6,123.5 335.0,123.5 335.0,121.1 337.5,121.1 337.5,125.9 373.5,125.9" fill="none" stroke="#3c3cff" stroke-opacity=".72" stroke-width="1.7" stroke-linejoin="round"/></g><g font-family="Liberation Serif, serif" font-size="14.4" letter-spacing="1.6" fill="#5e5e5e" stroke="#5e5e5e" stroke-width=".2"><text x="61.7" y="130.00" text-anchor="end">0</text><text x="61.7" y="94.37" text-anchor="end">10000</text><text x="61.7" y="58.73" text-anchor="end">20000</text><text x="61.7" y="23.10" text-anchor="end">30000</text><text x="66.20" y="142.8" text-anchor="middle">0</text><text x="114.26" y="142.8" text-anchor="middle">20</text><text x="162.32" y="142.8" text-anchor="middle">40</text><text x="210.39" y="142.8" text-anchor="middle">60</text><text x="258.45" y="142.8" text-anchor="middle">80</text><text x="306.51" y="142.8" text-anchor="middle">100</text><text x="354.57" y="142.8" text-anchor="middle">120</text></g><rect x="261.6" y="28.7" width="16.8" height="12.6" fill="#fffef4" stroke="#cccccc" stroke-width="1"/><rect x="262.9" y="30.1" width="14.1" height="9.8" fill="#0000ff"/><text x="283.3" y="39" font-family="Liberation Serif, serif" font-size="14.6" textLength="82.6" lengthAdjust="spacing" fill="#8e8e8e" stroke="#8e8e8e" stroke-width=".28">aida04 Rate</text><path d="M372.6,6.1 L385.1,18.6 L372.6,31.1 L360.1,18.6 Z" fill="#ff0000"/></svg>
<svg class="ic" style="left:100.00px;top:562.70px" width="400" height="150" viewBox="0 0 400 150"><g transform="translate(0,-0.6)"><path d="M113.46,19 V125 M161.52,19 V125 M209.59,19 V125 M257.65,19 V125 M305.71,19 V125 M353.77,19 V125 M66,90.00 H375.5 M66,54.10 H375.5 " stroke="#e6e6e6" stroke-width="1.0" fill="none"/><rect x="65.25" y="18.05" width="310.8" height="107.9" fill="none" stroke="#999999" stroke-width="2.3"/><polyline points="65.9,125.9 68.3,125.9 68.3,122.7 70.7,122.7 70.7,98.6 73.1,98.6 73.1,125.9 75.5,125.9 75.5,124.8 77.9,124.8 77.9,123.7 80.3,123.7 80.3,124.5 99.5,124.5 99.5,124.8 101.9,124.8 101.9,123.7 104.3,123.7 104.3,124.8 106.8,124.8 106.8,125.9 145.2,125.9 145.2,124.8 147.6,124.8 147.6,123.4 150.0,123.4 150.0,124.1 159.6,124.1 159.6,122.1 162.0,122.1 162.0,124.5 164.4,124.5 164.4,123.1 166.8,123.1 166.8,124.1 171.6,124.1 171.6,123.7 174.0,123.7 174.0,122.7 176.4,122.7 176.4,124.5 178.8,124.5 178.8,123.7 181.2,123.7 181.2,124.5 183.7,124.5 183.7,125.9 226.9,125.9 226.9,124.1 229.3,124.1 229.3,124.8 231.7,124.8 231.7,123.4 236.5,123.4 236.5,124.5 248.5,124.5 248.5,124.1 255.7,124.1 255.7,124.8 258.1,124.8 258.1,124.1 260.6,124.1 260.6,125.9 299.0,125.9 299.0,124.5 301.4,124.5 301.4,125.9 303.8,125.9 303.8,123.7 308.6,123.7 308.6,122.4 311.0,122.4 311.0,124.1 316.2,124.1 316.2,87.2 317.8,87.2 317.8,124.1 320.6,124.1 320.6,120.4 323.0,120.4 323.0,124.1 325.4,124.1 325.4,122.1 327.8,122.1 327.8,125.9 330.2,125.9 330.2,123.1 332.6,123.1 332.6,123.7 335.0,123.7 335.0,124.8 337.5,124.8 337.5,125.9 373.5,125.9" fill="none" stroke="#3c3cff" stroke-opacity=".72" stroke-width="1.7" stroke-linejoin="round"/></g><g font-family="Liberation Serif, serif" font-size="14.4" letter-spacing="1.6" fill="#5e5e5e" stroke="#5e5e5e" stroke-width=".2"><text x="61.7" y="130.00" text-anchor="end">0</text><text x="61.7" y="94.37" text-anchor="end">10000</text><text x="61.7" y="58.73" text-anchor="end">20000</text><text x="61.7" y="23.10" text-anchor="end">30000</text><text x="66.20" y="142.8" text-anchor="middle">0</text><text x="114.26" y="142.8" text-anchor="middle">20</text><text x="162.32" y="142.8" text-anchor="middle">40</text><text x="210.39" y="142.8" text-anchor="middle">60</text><text x="258.45" y="142.8" text-anchor="middle">80</text><text x="306.51" y="142.8" text-anchor="middle">100</text><text x="354.57" y="142.8" text-anchor="middle">120</text></g><rect x="261.6" y="28.7" width="16.8" height="12.6" fill="#fffef4" stroke="#cccccc" stroke-width="1"/><rect x="262.9" y="30.1" width="14.1" height="9.8" fill="#0000ff"/><text x="283.3" y="39" font-family="Liberation Serif, serif" font-size="14.6" textLength="82.6" lengthAdjust="spacing" fill="#8e8e8e" stroke="#8e8e8e" stroke-width=".28">aida05 Rate</text><path d="M372.6,6.1 L385.1,18.6 L372.6,31.1 L360.1,18.6 Z" fill="#ff0000"/></svg>
<svg class="ic" style="left:690.90px;top:562.70px" width="400" height="150" viewBox="0 0 400 150"><g transform="translate(0,-0.6)"><path d="M113.46,19 V125 M161.52,19 V125 M209.59,19 V125 M257.65,19 V125 M305.71,19 V125 M353.77,19 V125 M66,90.00 H375.5 M66,54.10 H375.5 " stroke="#e6e6e6" stroke-width="1.0" fill="none"/><rect x="65.25" y="18.05" width="310.8" height="107.9" fill="none" stroke="#999999" stroke-width="2.3"/><polyline points="65.9,125.9 68.3,125.9 68.3,108.8 70.7,108.8 70.7,94.3 73.1,94.3 73.1,111.6 75.5,111.6 75.5,115.6 77.9,115.6 77.9,111.9 80.3,111.9 80.3,117.6 82.7,117.6 82.7,116.6 85.1,116.6 85.1,117.3 87.5,117.3 87.5,119.0 89.9,119.0 89.9,119.7 92.3,119.7 92.3,118.3 97.1,118.3 97.1,121.4 99.5,121.4 99.5,120.4 101.9,120.4 101.9,118.0 104.3,118.0 104.3,122.1 106.8,122.1 106.8,125.9 145.2,125.9 145.2,119.7 147.6,119.7 147.6,119.0 152.4,119.0 152.4,120.4 154.8,120.4 154.8,119.7 157.2,119.7 157.2,116.6 159.6,116.6 159.6,119.0 162.0,119.0 162.0,120.4 164.4,120.4 164.4,119.3 166.8,119.3 166.8,118.0 169.2,118.0 169.2,121.7 174.0,121.7 174.0,121.0 176.4,121.0 176.4,122.4 178.8,122.4 178.8,119.3 181.2,119.3 181.2,120.0 183.7,120.0 183.7,125.9 222.1,125.9 222.1,118.3 224.5,118.3 224.5,122.7 226.9,122.7 226.9,118.7 229.3,118.7 229.3,120.0 231.7,120.0 231.7,119.0 234.1,119.0 234.1,120.4 238.9,120.4 238.9,116.6 241.3,116.6 241.3,121.7 243.7,121.7 243.7,120.0 246.1,120.0 246.1,119.7 248.5,119.7 248.5,120.4 250.9,120.4 250.9,120.0 253.3,120.0 253.3,119.0 255.7,119.0 255.7,120.0 258.1,120.0 258.1,120.4 260.6,120.4 260.6,125.9 299.0,125.9 299.0,123.1 301.4,123.1 301.4,120.4 303.8,120.4 303.8,118.3 306.2,118.3 306.2,121.7 308.6,121.7 308.6,115.0 311.0,115.0 311.0,117.3 313.4,117.3 313.4,120.0 316.2,120.0 316.2,99.7 317.8,99.7 317.8,120.0 323.0,120.0 323.0,116.3 325.4,116.3 325.4,121.4 327.8,121.4 327.8,118.0 330.2,118.0 330.2,102.5 332.6,102.5 332.6,119.0 337.5,119.0 337.5,125.9 373.5,125.9" fill="none" stroke="#3c3cff" stroke-opacity=".72" stroke-width="1.7" stroke-linejoin="round"/></g><g font-family="Liberation Serif, serif" font-size="14.4" letter-spacing="1.6" fill="#5e5e5e" stroke="#5e5e5e" stroke-width=".2"><text x="62.1" y="130.00" text-anchor="end">0</text><text x="62.1" y="94.37" text-anchor="end">10000</text><text x="62.1" y="58.73" text-anchor="end">20000</text><text x="62.1" y="23.10" text-anchor="end">30000</text><text x="67.20" y="142.8" text-anchor="middle">0</text><text x="115.26" y="142.8" text-anchor="middle">20</text><text x="163.32" y="142.8" text-anchor="middle">40</text><text x="211.39" y="142.8" text-anchor="middle">60</text><text x="259.45" y="142.8" text-anchor="middle">80</text><text x="307.51" y="142.8" text-anchor="middle">100</text><text x="355.57" y="142.8" text-anchor="middle">120</text></g><rect x="261.6" y="28.7" width="16.8" height="12.6" fill="#fffef4" stroke="#cccccc" stroke-width="1"/><rect x="262.9" y="30.1" width="14.1" height="9.8" fill="#0000ff"/><text x="284.1" y="39" font-family="Liberation Serif, serif" font-size="14.6" textLength="82.6" lengthAdjust="spacing" fill="#8e8e8e" stroke="#8e8e8e" stroke-width=".28">aida06 Rate</text><path d="M372.6,6.1 L385.1,18.6 L372.6,31.1 L360.1,18.6 Z" fill="#ff0000"/></svg>
<svg class="ic" style="left:1283.30px;top:562.70px" width="400" height="150" viewBox="0 0 400 150"><g transform="translate(0,-0.6)"><path d="M113.46,19 V125 M161.52,19 V125 M209.59,19 V125 M257.65,19 V125 M305.71,19 V125 M353.77,19 V125 M66,90.00 H375.5 M66,54.10 H375.5 " stroke="#e6e6e6" stroke-width="1.0" fill="none"/><rect x="65.25" y="18.05" width="310.8" height="107.9" fill="none" stroke="#999999" stroke-width="2.3"/><polyline points="65.9,125.9 70.7,125.9 70.7,86.6 73.1,86.6 73.1,122.7 75.5,122.7 75.5,122.1 77.9,122.1 77.9,125.9 80.3,125.9 80.3,117.6 82.7,117.6 82.7,118.3 85.1,118.3 85.1,118.0 87.5,118.0 87.5,118.7 89.9,118.7 89.9,121.7 97.1,121.7 97.1,123.7 99.5,123.7 99.5,119.7 101.9,119.7 101.9,122.7 104.3,122.7 104.3,124.1 106.8,124.1 106.8,125.9 145.2,125.9 145.2,118.7 147.6,118.7 147.6,121.7 150.0,121.7 150.0,118.3 152.4,118.3 152.4,120.0 154.8,120.0 154.8,120.4 157.2,120.4 157.2,119.0 159.6,119.0 159.6,118.8 162.0,118.8 162.0,121.7 164.4,121.7 164.4,119.0 166.8,119.0 166.8,119.7 169.2,119.7 169.2,121.0 174.0,121.0 174.0,121.4 176.4,121.4 176.4,122.4 178.8,122.4 178.8,121.7 181.2,121.7 181.2,123.7 183.7,123.7 183.7,125.9 224.5,125.9 224.5,119.0 226.9,119.0 226.9,122.7 234.1,122.7 234.1,123.4 236.5,123.4 236.5,122.1 241.3,122.1 241.3,122.7 243.7,122.7 243.7,124.1 246.1,124.1 246.1,124.8 248.5,124.8 248.5,123.1 250.9,123.1 250.9,124.1 253.3,124.1 253.3,123.1 258.1,123.1 258.1,125.9 303.8,125.9 303.8,123.1 306.2,123.1 306.2,119.3 308.6,119.3 308.6,116.6 311.0,116.6 311.0,125.9 316.2,125.9 316.2,86.9 317.8,86.9 317.8,120.4 320.6,120.4 320.6,121.4 323.0,121.4 323.0,117.0 325.4,117.0 325.4,120.4 327.8,120.4 327.8,125.9 330.2,125.9 330.2,96.7 332.6,96.7 332.6,122.7 335.0,122.7 335.0,118.3 337.5,118.3 337.5,125.9 373.5,125.9" fill="none" stroke="#3c3cff" stroke-opacity=".72" stroke-width="1.7" stroke-linejoin="round"/></g><g font-family="Liberation Serif, serif" font-size="14.4" letter-spacing="1.6" fill="#5e5e5e" stroke="#5e5e5e" stroke-width=".2"><text x="61.7" y="130.00" text-anchor="end">0</text><text x="61.7" y="94.37" text-anchor="end">10000</text><text x="61.7" y="58.73" text-anchor="end">20000</text><text x="61.7" y="23.10" text-anchor="end">30000</text><text x="66.20" y="142.8" text-anchor="middle">0</text><text x="114.26" y="142.8" text-anchor="middle">20</text><text x="162.32" y="142.8" text-anchor="middle">40</text><text x="210.39" y="142.8" text-anchor="middle">60</text><text x="258.45" y="142.8" text-anchor="middle">80</text><text x="306.51" y="142.8" text-anchor="middle">100</text><text x="354.57" y="142.8" text-anchor="middle">120</text></g><rect x="261.6" y="28.7" width="16.8" height="12.6" fill="#fffef4" stroke="#cccccc" stroke-width="1"/><rect x="262.9" y="30.1" width="14.1" height="9.8" fill="#0000ff"/><text x="283.3" y="39" font-family="Liberation Serif, serif" font-size="14.6" textLength="82.6" lengthAdjust="spacing" fill="#8e8e8e" stroke="#8e8e8e" stroke-width=".28">aida07 Rate</text><path d="M372.6,6.1 L385.1,18.6 L372.6,31.1 L360.1,18.6 Z" fill="#ff0000"/></svg>
<svg class="ic" style="left:1874.65px;top:562.70px" width="400" height="150" viewBox="0 0 400 150"><g transform="translate(0,-0.6)"><path d="M113.46,19 V125 M161.52,19 V125 M209.59,19 V125 M257.65,19 V125 M305.71,19 V125 M353.77,19 V125 M66,90.00 H375.5 M66,54.10 H375.5 " stroke="#e6e6e6" stroke-width="1.0" fill="none"/><rect x="65.25" y="18.05" width="310.8" height="107.9" fill="none" stroke="#999999" stroke-width="2.3"/><polyline points="65.9,125.9 68.3,125.9 68.3,107.8 70.7,107.8 70.7,91.6 73.1,91.6 73.1,116.6 75.5,116.6 75.5,112.9 80.3,112.9 80.3,119.7 82.7,119.7 82.7,121.7 87.5,121.7 87.5,124.8 89.9,124.8 89.9,123.4 92.3,123.4 92.3,124.1 94.7,124.1 94.7,120.4 97.1,120.4 97.1,125.4 99.5,125.4 99.5,124.8 106.8,124.8 106.8,125.9 145.2,125.9 145.2,124.1 147.6,124.1 147.6,123.7 150.0,123.7 150.0,124.5 152.4,124.5 152.4,124.8 154.8,124.8 154.8,125.9 157.2,125.9 157.2,123.4 159.6,123.4 159.6,124.8 162.0,124.8 162.0,124.1 169.2,124.1 169.2,124.8 176.4,124.8 176.4,125.4 181.2,125.4 181.2,125.9 222.1,125.9 222.1,124.5 226.9,124.5 226.9,125.2 229.3,125.2 229.3,124.3 234.1,124.3 234.1,124.6 258.1,124.6 258.1,124.1 260.6,124.1 260.6,125.9 299.0,125.9 299.0,124.8 303.8,124.8 303.8,122.8 306.2,122.8 306.2,124.5 308.6,124.5 308.6,121.4 311.0,121.4 311.0,124.8 313.4,124.8 313.4,124.5 316.2,124.5 316.2,70.7 317.8,70.7 317.8,124.8 320.6,124.8 320.6,124.1 323.0,124.1 323.0,123.7 325.4,123.7 325.4,125.2 327.8,125.2 327.8,123.4 330.2,123.4 330.2,104.2 332.6,104.2 332.6,123.7 335.0,123.7 335.0,124.1 337.5,124.1 337.5,125.9 373.5,125.9" fill="none" stroke="#3c3cff" stroke-opacity=".72" stroke-width="1.7" stroke-linejoin="round"/></g><g font-family="Liberation Serif, serif" font-size="14.4" letter-spacing="1.6" fill="#5e5e5e" stroke="#5e5e5e" stroke-width=".2"><text x="61.7" y="130.00" text-anchor="end">0</text><text x="61.7" y="94.37" text-anchor="end">10000</text><text x="61.7" y="58.73" text-anchor="end">20000</text><text x="61.7" y="23.10" text-anchor="end">30000</text><text x="66.20" y="142.8" text-anchor="middle">0</text><text x="114.26" y="142.8" text-anchor="middle">20</text><text x="162.32" y="142.8" text-anchor="middle">40</text><text x="210.39" y="142.8" text-anchor="middle">60</text><text x="258.45" y="142.8" text-anchor="middle">80</text><text x="306.51" y="142.8" text-anchor="middle">100</text><text x="354.57" y="142.8" text-anchor="middle">120</text></g><rect x="261.6" y="28.7" width="16.8" height="12.6" fill="#fffef4" stroke="#cccccc" stroke-width="1"/><rect x="262.9" y="30.1" width="14.1" height="9.8" fill="#0000ff"/><text x="283.3" y="39" font-family="Liberation Serif, serif" font-size="14.6" textLength="82.6" lengthAdjust="spacing" fill="#8e8e8e" stroke="#8e8e8e" stroke-width=".28">aida08 Rate</text><path d="M372.6,6.1 L385.1,18.6 L372.6,31.1 L360.1,18.6 Z" fill="#ff0000"/></svg>
<svg class="ic" style="left:100.00px;top:715.40px" width="400" height="150" viewBox="0 0 400 150"><g transform="translate(0,-0.6)"><path d="M113.46,19 V125 M161.52,19 V125 M209.59,19 V125 M257.65,19 V125 M305.71,19 V125 M353.77,19 V125 M66,90.00 H375.5 M66,54.10 H375.5 " stroke="#e6e6e6" stroke-width="1.0" fill="none"/><rect x="65.25" y="18.05" width="310.8" height="107.9" fill="none" stroke="#999999" stroke-width="2.3"/><polyline points="65.9,125.9 373.5,125.9" fill="none" stroke="#3c3cff" stroke-opacity=".72" stroke-width="1.7" stroke-linejoin="round"/></g><g font-family="Liberation Serif, serif" font-size="14.4" letter-spacing="1.6" fill="#5e5e5e" stroke="#5e5e5e" stroke-width=".2"><text x="61.7" y="130.00" text-anchor="end">0</text><text x="61.7" y="94.37" text-anchor="end">10000</text><text x="61.7" y="58.73" text-anchor="end">20000</text><text x="61.7" y="23.10" text-anchor="end">30000</text><text x="66.20" y="142.8" text-anchor="middle">0</text><text x="114.26" y="142.8" text-anchor="middle">20</text><text x="162.32" y="142.8" text-anchor="middle">40</text><text x="210.39" y="142.8" text-anchor="middle">60</text><text x="258.45" y="142.8" text-anchor="middle">80</text><text x="306.51" y="142.8" text-anchor="middle">100</text><text x="354.57" y="142.8" text-anchor="middle">120</text></g><rect x="261.6" y="28.7" width="16.8" height="12.6" fill="#fffef4" stroke="#cccccc" stroke-width="1"/><rect x="262.9" y="30.1" width="14.1" height="9.8" fill="#0000ff"/><text x="283.3" y="39" font-family="Liberation Serif, serif" font-size="14.6" textLength="82.6" lengthAdjust="spacing" fill="#8e8e8e" stroke="#8e8e8e" stroke-width=".28">aida09 Rate</text><path d="M372.6,6.1 L385.1,18.6 L372.6,31.1 L360.1,18.6 Z" fill="#ff0000"/></svg>
<svg class="ic" style="left:690.90px;top:715.40px" width="400" height="150" viewBox="0 0 400 150"><g transform="translate(0,-0.6)"><path d="M113.46,19 V125 M161.52,19 V125 M209.59,19 V125 M257.65,19 V125 M305.71,19 V125 M353.77,19 V125 M66,90.00 H375.5 M66,54.10 H375.5 " stroke="#e6e6e6" stroke-width="1.0" fill="none"/><rect x="65.25" y="18.05" width="310.8" height="107.9" fill="none" stroke="#999999" stroke-width="2.3"/><polyline points="65.9,125.9 68.3,125.9 68.3,115.1 70.7,115.1 70.7,104.6 73.1,104.6 73.1,119.5 75.5,119.5 75.5,115.7 77.9,115.7 77.9,117.4 80.3,117.4 80.3,118.8 82.7,118.8 82.7,118.1 85.1,118.1 85.1,119.1 87.5,119.1 87.5,119.8 89.9,119.8 89.9,121.8 92.3,121.8 92.3,121.5 94.7,121.5 94.7,119.5 97.1,119.5 97.1,120.5 99.5,120.5 99.5,119.5 101.9,119.5 101.9,121.2 104.3,121.2 104.3,117.4 106.8,117.4 106.8,125.9 145.2,125.9 145.2,117.1 147.6,117.1 147.6,117.4 150.0,117.4 150.0,116.4 152.4,116.4 152.4,118.1 154.8,118.1 154.8,117.1 157.2,117.1 157.2,115.4 159.6,115.4 159.6,105.9 162.0,105.9 162.0,116.1 164.4,116.1 164.4,115.1 169.2,115.1 169.2,82.5 171.6,82.5 171.6,103.2 174.0,103.2 174.0,115.4 176.4,115.4 176.4,113.7 178.8,113.7 178.8,110.6 181.2,110.6 181.2,114.1 183.7,114.1 183.7,125.9 222.1,125.9 222.1,104.2 224.5,104.2 224.5,106.6 226.9,106.6 226.9,111.3 229.3,111.3 229.3,110.0 231.7,110.0 231.7,107.3 234.1,107.3 234.1,80.8 236.5,80.8 236.5,79.2 238.9,79.2 238.9,109.6 241.3,109.6 241.3,111.0 243.7,111.0 243.7,110.0 246.1,110.0 246.1,109.9 248.5,109.9 248.5,111.3 250.9,111.3 250.9,112.0 253.3,112.0 253.3,113.4 255.7,113.4 255.7,114.4 258.1,114.4 258.1,112.0 260.6,112.0 260.6,125.9 299.0,125.9 299.0,115.4 301.4,115.4 301.4,114.1 303.8,114.1 303.8,114.4 306.2,114.4 306.2,115.4 308.6,115.4 308.6,114.4 311.0,114.4 311.0,116.7 313.4,116.7 313.4,114.4 316.2,114.4 316.2,96.8 317.8,96.8 317.8,114.1 320.6,114.1 320.6,113.0 323.0,113.0 323.0,110.6 325.4,110.6 325.4,117.4 327.8,117.4 327.8,115.7 330.2,115.7 330.2,108.6 332.6,108.6 332.6,116.7 335.0,116.7 335.0,114.7 337.5,114.7 337.5,125.9 373.5,125.9" fill="none" stroke="#3c3cff" stroke-opacity=".72" stroke-width="1.7" stroke-linejoin="round"/></g><g font-family="Liberation Serif, serif" font-size="14.4" letter-spacing="1.6" fill="#5e5e5e" stroke="#5e5e5e" stroke-width=".2"><text x="62.1" y="130.00" text-anchor="end">0</text><text x="62.1" y="94.37" text-anchor="end">10000</text><text x="62.1" y="58.73" text-anchor="end">20000</text><text x="62.1" y="23.10" text-anchor="end">30000</text><text x="67.20" y="142.8" text-anchor="middle">0</text><text x="115.26" y="142.8" text-anchor="middle">20</text><text x="163.32" y="142.8" text-anchor="middle">40</text><text x="211.39" y="142.8" text-anchor="middle">60</text><text x="259.45" y="142.8" text-anchor="middle">80</text><text x="307.51" y="142.8" text-anchor="middle">100</text><text x="355.57" y="142.8" text-anchor="middle">120</text></g><rect x="261.6" y="28.7" width="16.8" height="12.6" fill="#fffef4" stroke="#cccccc" stroke-width="1"/><rect x="262.9" y="30.1" width="14.1" height="9.8" fill="#0000ff"/><text x="284.1" y="39" font-family="Liberation Serif, serif" font-size="14.6" textLength="82.6" lengthAdjust="spacing" fill="#8e8e8e" stroke="#8e8e8e" stroke-width=".28">aida10 Rate</text><path d="M372.6,6.1 L385.1,18.6 L372.6,31.1 L360.1,18.6 Z" fill="#ff0000"/></svg>
<svg class="ic" style="left:1283.30px;top:715.40px" width="400" height="150" viewBox="0 0 400 150"><g transform="translate(0,-0.6)"><path d="M113.46,19 V125 M161.52,19 V125 M209.59,19 V125 M257.65,19 V125 M305.71,19 V125 M353.77,19 V125 M66,90.00 H375.5 M66,54.10 H375.5 " stroke="#e6e6e6" stroke-width="1.0" fill="none"/><rect x="65.25" y="18.05" width="310.8" height="107.9" fill="none" stroke="#999999" stroke-width="2.3"/><polyline points="65.9,125.9 68.3,125.9 68.3,106.6 70.7,106.6 70.7,125.9 73.1,125.9 73.1,110.6 75.5,110.6 75.5,111.3 77.9,111.3 77.9,108.3 80.3,108.3 80.3,116.7 82.7,116.7 82.7,114.1 85.1,114.1 85.1,114.4 87.5,114.4 87.5,119.5 89.9,119.5 89.9,125.9 92.3,125.9 92.3,118.8 94.7,118.8 94.7,119.5 97.1,119.5 97.1,122.8 101.9,122.8 101.9,122.2 104.3,122.2 104.3,124.5 106.8,124.5 106.8,125.9 147.6,125.9 147.6,123.5 150.0,123.5 150.0,121.8 152.4,121.8 152.4,123.2 159.6,123.2 159.6,124.5 164.4,124.5 164.4,123.9 166.8,123.9 166.8,124.5 176.4,124.5 176.4,124.2 181.2,124.2 181.2,124.8 183.7,124.8 183.7,125.9 222.1,125.9 222.1,122.8 226.9,122.8 226.9,125.9 231.7,125.9 231.7,123.2 234.1,123.2 234.1,124.5 243.7,124.5 243.7,125.2 248.5,125.2 248.5,124.1 250.9,124.1 250.9,124.5 255.7,124.5 255.7,125.9 258.1,125.9 258.1,124.5 260.6,124.5 260.6,125.9 299.0,125.9 299.0,121.2 301.4,121.2 301.4,124.5 316.2,124.5 316.2,95.7 317.8,95.7 317.8,124.5 323.0,124.5 323.0,121.5 325.4,121.5 325.4,123.5 327.8,123.5 327.8,124.5 330.2,124.5 330.2,101.5 332.6,101.5 332.6,124.5 337.5,124.5 337.5,125.9 373.5,125.9" fill="none" stroke="#3c3cff" stroke-opacity=".72" stroke-width="1.7" stroke-linejoin="round"/></g><g font-family="Liberation Serif, serif" font-size="14.4" letter-spacing="1.6" fill="#5e5e5e" stroke="#5e5e5e" stroke-width=".2"><text x="61.7" y="130.00" text-anchor="end">0</text><text x="61.7" y="94.37" text-anchor="end">10000</text><text x="61.7" y="58.73" text-anchor="end">20000</text><text x="61.7" y="23.10" text-anchor="end">30000</text><text x="66.20" y="142.8" text-anchor="middle">0</text><text x="114.26" y="142.8" text-anchor="middle">20</text><text x="162.32" y="142.8" text-anchor="middle">40</text><text x="210.39" y="142.8" text-anchor="middle">60</text><text x="258.45" y="142.8" text-anchor="middle">80</text><text x="306.51" y="142.8" text-anchor="middle">100</text><text x="354.57" y="142.8" text-anchor="middle">120</text></g><rect x="261.6" y="28.7" width="16.8" height="12.6" fill="#fffef4" stroke="#cccccc" stroke-width="1"/><rect x="262.9" y="30.1" width="14.1" height="9.8" fill="#0000ff"/><text x="283.3" y="39" font-family="Liberation Serif, serif" font-size="14.6" textLength="82.6" lengthAdjust="spacing" fill="#8e8e8e" stroke="#8e8e8e" stroke-width=".28">aida11 Rate</text><path d="M372.6,6.1 L385.1,18.6 L372.6,31.1 L360.1,18.6 Z" fill="#ff0000"/></svg>
<svg class="ic" style="left:1874.65px;top:715.40px" width="400" height="150" viewBox="0 0 400 150"><g transform="translate(0,-0.6)"><path d="M113.46,19 V125 M161.52,19 V125 M209.59,19 V125 M257.65,19 V125 M305.71,19 V125 M353.77,19 V125 M66,90.00 H375.5 M66,54.10 H375.5 " stroke="#bdbdbd" stroke-width="0.95" fill="none"/><rect x="65.25" y="18.05" width="310.8" height="107.9" fill="none" stroke="#262626" stroke-width="2.3"/><polyline points="65.9,125.9 68.3,125.9 68.3,103.5 70.7,103.5 70.7,93.1 73.1,93.1 73.1,109.3 75.5,109.3 75.5,109.5 77.9,109.5 77.9,106.3 80.3,106.3 80.3,110.6 82.7,110.6 82.7,112.2 85.1,112.2 85.1,111.7 87.5,111.7 87.5,111.3 89.9,111.3 89.9,113.4 92.3,113.4 92.3,112.4 94.7,112.4 94.7,113.2 97.1,113.2 97.1,113.4 99.5,113.4 99.5,111.7 101.9,111.7 101.9,113.0 104.3,113.0 104.3,113.2 106.8,113.2 106.8,125.9 145.2,125.9 145.2,107.6 147.6,107.6 147.6,108.6 150.0,108.6 150.0,110.3 152.4,110.3 152.4,109.3 154.8,109.3 154.8,110.6 157.2,110.6 157.2,110.5 159.6,110.5 159.6,112.0 162.0,112.0 162.0,111.7 164.4,111.7 164.4,113.0 166.8,113.0 166.8,113.4 169.2,113.4 169.2,113.0 176.4,113.0 176.4,111.7 178.8,111.7 178.8,112.0 181.2,112.0 181.2,113.2 183.7,113.2 183.7,125.9 222.1,125.9 222.1,106.6 224.5,106.6 224.5,107.8 226.9,107.8 226.9,108.3 229.3,108.3 229.3,108.0 231.7,108.0 231.7,113.0 234.1,113.0 234.1,110.6 236.5,110.6 236.5,111.7 238.9,111.7 238.9,111.5 241.3,111.5 241.3,114.4 248.5,114.4 248.5,118.1 250.9,118.1 250.9,117.4 253.3,117.4 253.3,116.6 255.7,116.6 255.7,116.4 258.1,116.4 258.1,116.6 260.6,116.6 260.6,125.9 299.0,125.9 299.0,114.4 301.4,114.4 301.4,116.4 303.8,116.4 303.8,115.4 306.2,115.4 306.2,116.0 308.6,116.0 308.6,116.1 311.0,116.1 311.0,119.1 313.4,119.1 313.4,118.8 316.2,118.8 316.2,96.4 317.8,96.4 317.8,120.2 320.6,120.2 320.6,118.4 323.0,118.4 323.0,120.2 325.4,120.2 325.4,120.8 327.8,120.8 327.8,115.7 330.2,115.7 330.2,105.6 332.6,105.6 332.6,120.8 335.0,120.8 335.0,118.4 337.5,118.4 337.5,125.9 373.5,125.9" fill="none" stroke="#3c3cff" stroke-opacity=".72" stroke-width="1.7" stroke-linejoin="round"/></g><g font-family="Liberation Serif, serif" font-size="14.4" letter-spacing="1.6" fill="#5e5e5e" stroke="#5e5e5e" stroke-width=".2"><text x="61.7" y="130.00" text-anchor="end">0</text><text x="61.7" y="94.37" text-anchor="end">10000</text><text x="61.7" y="58.73" text-anchor="end">20000</text><text x="61.7" y="23.10" text-anchor="end">30000</text><text x="66.20" y="142.8" text-anchor="middle">0</text><text x="114.26" y="142.8" text-anchor="middle">20</text><text x="162.32" y="142.8" text-anchor="middle">40</text><text x="210.39" y="142.8" text-anchor="middle">60</text><text x="258.45" y="142.8" text-anchor="middle">80</text><text x="306.51" y="142.8" text-anchor="middle">100</text><text x="354.57" y="142.8" text-anchor="middle">120</text></g><rect x="261.6" y="28.7" width="16.8" height="12.6" fill="#fffef4" stroke="#cccccc" stroke-width="1"/><rect x="262.9" y="30.1" width="14.1" height="9.8" fill="#0000ff"/><text x="283.3" y="39" font-family="Liberation Serif, serif" font-size="14.6" textLength="82.6" lengthAdjust="spacing" fill="#000000" stroke="#000000" stroke-width=".28">aida12 Rate</text><path d="M372.6,6.1 L385.1,18.6 L372.6,31.1 L360.1,18.6 Z" fill="#00ff00"/></svg>
</div>
</body></html>
